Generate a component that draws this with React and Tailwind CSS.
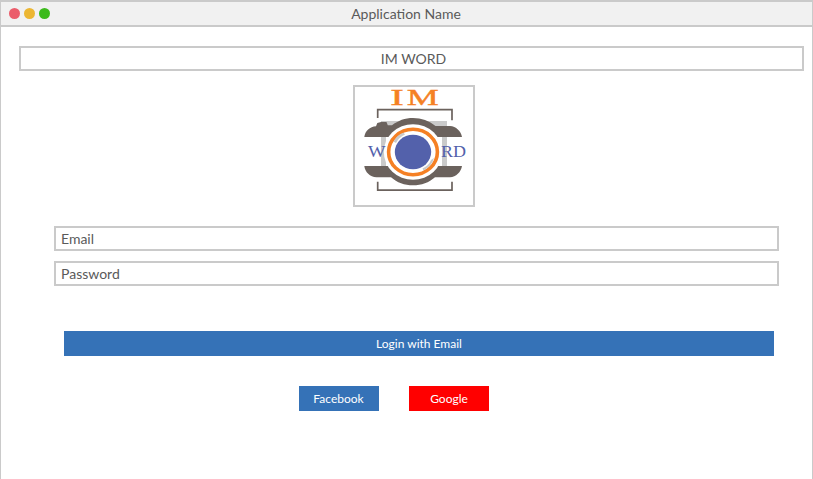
function Logo() {
  return (
    <svg viewBox="5 5 118 118" className="block h-[118px] w-[118px] overflow-visible" aria-label="IM WORD logo">
      <path d="M31 39H97V93H31Z" fill="#cacaca" />
      <path d="M36 55H92V84H36Z" fill="#fff" />
      <g fill="none" stroke="#6b625d" strokeWidth="1.7">
        <path d="M27.7 36V27.7H102V38.3" />
        <path d="M27.7 99.8V108.2H102V99.8" />
      </g>
      <g fill="#6b625d">
        <path d="M14.3 55C15 49 20 44.5 26 44.2L27.3 41L31 40H36.5L37.8 43.3L42 43.3C48 38.5 55 36 63 36C71.5 36 79 38.8 85.5 44H100C106 44.5 111 49 112 55Z" />
        <path d="M14.3 84C15 90 20 95 26.5 95.2H41C47 100.5 54.5 103.3 63 103.3C71.5 103.3 79 100.5 85 95.2H100C106 95 111 90 112 84Z" />
      </g>
      <ellipse cx="63" cy="70" rx="29.2" ry="27.8" fill="#fff" />
      <ellipse cx="63" cy="70" rx="24.4" ry="22.7" fill="none" stroke="#f58024" strokeWidth="3.6" />
      <path d="M43.5 59.5Q47 53 53.5 50.8L55 52.5Q48.5 55.5 46 61ZM81 78L84 76Q82 84 73.5 88.5L72.5 86.5Q79 83.5 81 78Z" fill="#cacaca" />
      <ellipse cx="63" cy="70" rx="18.2" ry="17.2" fill="#5361ab" />
      <g fontFamily="'Liberation Serif', serif">
        <g fill="#f58024" stroke="#f58024" strokeWidth=".4" fontSize="23.5">
          <text x="40.3" y="22.8" textLength="13.5" lengthAdjust="spacingAndGlyphs">I</text>
          <text x="56.8" y="22.8" textLength="32" lengthAdjust="spacingAndGlyphs">M</text>
        </g>
        <g fill="#5361ab" fontSize="16">
          <text x="18" y="75" textLength="17.5" lengthAdjust="spacingAndGlyphs">W</text>
          <text x="91" y="75" textLength="25" lengthAdjust="spacingAndGlyphs">RD</text>
        </g>
      </g>
    </svg>
  );
}

function Field({ label }) {
  return (
    <div className="flex h-[25px] items-center border-2 border-[#cacaca] pl-[5px]">{label}</div>
  );
}

export default function App() {
  return (
    <div className="flex h-[479px] w-[813px] flex-col overflow-hidden border-x border-[#cacaca] bg-white font-['Lato',sans-serif] text-[14px] leading-[21px] text-[#5a5a5a]">
      <header className="grid h-[27px] shrink-0 grid-cols-[1fr_auto_1fr] items-center border-y-2 border-[#cacaca] bg-[#f1f1f1] pr-px">
        <div className="flex gap-[4.5px] pl-2">
          <span className="size-[10.5px] rounded-full bg-[#eb5d6b]" />
          <span className="size-[10.5px] rounded-full bg-[#ecb632]" />
          <span className="size-[10.5px] rounded-full bg-[#3cba1c]" />
        </div>
        <span>Application Name</span>
      </header>
      <main className="flex flex-col">
        <h1 className="mt-[19px] mr-2 ml-[18px] flex h-[25px] items-center justify-center border-2 border-[#cacaca] pl-1">IM WORD</h1>
        <div className="mt-[14px] ml-[352px] size-[122px] border-2 border-[#cacaca]">
          <Logo />
        </div>
        <div className="mt-[19px] mr-[33px] ml-[53px] flex flex-col gap-[10px]">
          <Field label="Email" />
          <Field label="Password" />
        </div>
        <button className="mt-[45px] mr-[38px] ml-[63px] h-[25px] bg-[#3572b7] text-[12px] text-white">Login with Email</button>
        <div className="mt-[30px] ml-[298px] flex gap-[30px] text-[12px] text-white">
          <button className="h-[25px] w-20 bg-[#3572b7] pr-px">Facebook</button>
          <button className="h-[25px] w-20 bg-[#ff0000]">Google</button>
        </div>
      </main>
    </div>
  );
}
